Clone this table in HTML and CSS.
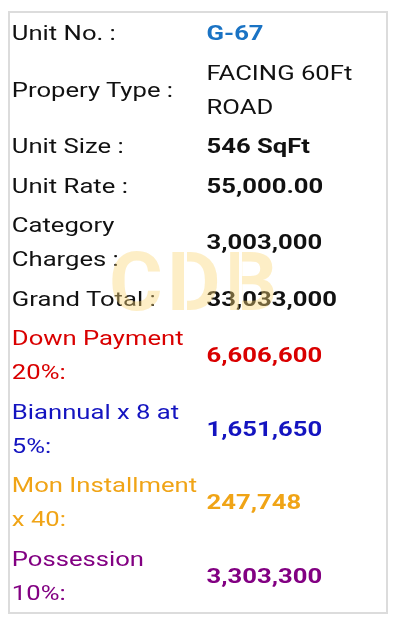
FILE: index.html
```html
<!DOCTYPE html>
<html>
<head>
<meta charset="utf-8">
<link rel="stylesheet" href="styles.css">
</head>
<body>
<div class="card">
  <div class="rows">
    <div class="row"><div class="label">Unit No. :</div><div class="value v-unit">G-67</div></div>
    <div class="row"><div class="label">Propery Type :</div><div class="value v-normal">FACING 60Ft ROAD</div></div>
    <div class="row"><div class="label">Unit Size :</div><div class="value">546 SqFt</div></div>
    <div class="row"><div class="label">Unit Rate :</div><div class="value">55,000.00</div></div>
    <div class="row"><div class="label">Category Charges :</div><div class="value">3,003,000</div></div>
    <div class="row"><div class="label">Grand Total :</div><div class="value">33,033,000</div></div>
    <div class="row red"><div class="label">Down Payment 20%:</div><div class="value">6,606,600</div></div>
    <div class="row blue"><div class="label">Biannual x 8 at 5%:</div><div class="value">1,651,650</div></div>
    <div class="row orange"><div class="label">Mon Installment x 40:</div><div class="value">247,748</div></div>
    <div class="row purple"><div class="label">Possession 10%:</div><div class="value">3,303,300</div></div>
  </div>
  <div class="watermark">CDB</div>
</div>
</body>
</html>
```
FILE: styles.css
```css
html, body {
  margin: 0;
  padding: 0;
  background: #fff;
}
body {
  font-family: Roboto, "Liberation Sans", sans-serif;
  font-size: 21px;
  line-height: 34px;
  color: #111;
}
.card {
  position: relative;
  margin: 11px 8px 0 8px;
  width: 376px;
  border: 2px solid #dcdcdc;
}
.rows {
  width: 306px;
  padding: 3px 0 2px 1.5px;
  transform: scaleX(1.2208);
  transform-origin: 0 0;
  display: flex;
  flex-direction: column;
  gap: 5.5px;
}
.row {
  display: grid;
  grid-template-columns: 154px 1fr;
  column-gap: 5.5px;
  align-items: center;
}
.label {
  font-weight: 400;
}
.value {
  font-weight: 700;
}
.v-normal {
  font-weight: 400;
}
.v-unit {
  color: #1a73c4;
}
.red { color: #d90000; }
.blue { color: #1414c0; }
.orange { color: #f0a416; }
.purple { color: #820082; }
.watermark {
  position: absolute;
  left: 99px;
  top: 228px;
  font-family: Roboto, "Liberation Sans", sans-serif;
  font-weight: 700;
  font-size: 82px;
  line-height: 82px;
  letter-spacing: 4.5px;
  color: rgba(250, 215, 120, 0.42);
  pointer-events: none;
  -webkit-mask-image: linear-gradient(to right, #000 0, #000 75px, transparent 75px, transparent 78px, #000 78px, #000 130px, transparent 130px, transparent 133px, #000 133px);
  mask-image: linear-gradient(to right, #000 0, #000 75px, transparent 75px, transparent 78px, #000 78px, #000 130px, transparent 130px, transparent 133px, #000 133px);
}
```
